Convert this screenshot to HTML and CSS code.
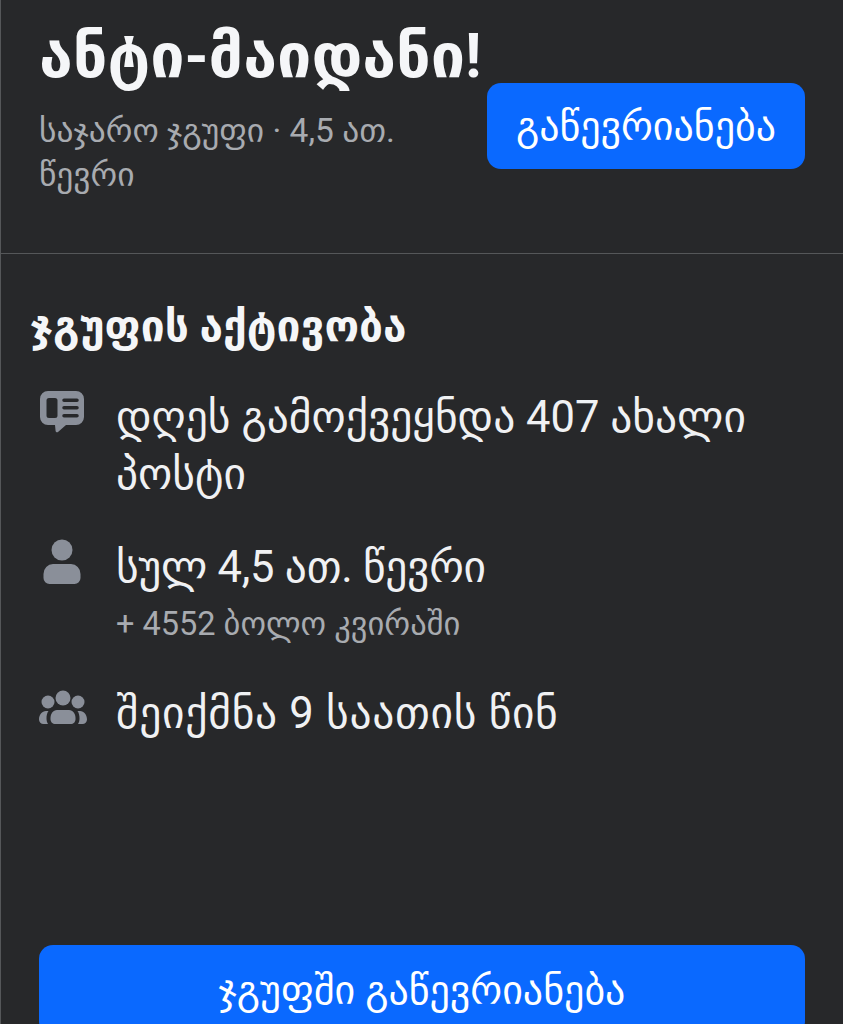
FILE: index.html
```html
<!DOCTYPE html>
<html lang="ka">
<head>
    <meta charset="UTF-8">
    <meta name="viewport" content="width=device-width, initial-scale=1.0">
    <title>ანტი-მაიდანი!</title>
    <link rel="stylesheet" href="styles.css">
</head>
<body>
    <div class="page">
        <header class="group-header">
            <div class="group-info">
                <h1>ანტი-მაიდანი!</h1>
                <p class="group-meta">საჯარო ჯგუფი · 4,5 ათ. წევრი</p>
            </div>
            <button class="btn btn-small">გაწევრიანება</button>
        </header>

        <section class="activity">
            <h2>ჯგუფის აქტივობა</h2>

            <div class="activity-row row-posts">
                <span class="icon-box">
                    <svg width="46" height="44" viewBox="0 0 46 44">
                        <path fill="#8a8f99" fill-rule="evenodd" d="M9 1h28a8 8 0 0 1 8 8v18a8 8 0 0 1-8 8H27l-8 7a1.500 1.500 0 0 1-2.400-1l-.6-6H9a8 8 0 0 1-8-8V9a8 8 0 0 1 8-8zM10 8a2.500 2.500 0 0 0-2.500 2.500v15A2.500 2.500 0 0 0 10 28h6a2.500 2.500 0 0 0 2.500-2.500v-15A2.500 2.500 0 0 0 16 8zM25 8.500a1.750 1.750 0 0 0 0 3.500h13a1.750 1.750 0 0 0 0-3.500zM25 16a1.750 1.750 0 0 0 0 3.500h13a1.750 1.750 0 0 0 0-3.500zM25 24a1.750 1.750 0 0 0 0 3.500h13a1.750 1.750 0 0 0 0-3.500z"/>
                    </svg>
                </span>
                <div class="activity-text">
                    <p>დღეს გამოქვეყნდა 407 ახალი პოსტი</p>
                </div>
            </div>

            <div class="activity-row row-members">
                <span class="icon-box">
                    <svg width="46" height="46" viewBox="0 0 46 46">
                        <circle cx="23" cy="11" r="10.500" fill="#8a8f99"/>
                        <path fill="#8a8f99" d="M14 25h18a10 10 0 0 1 9.500 10v4a6 6 0 0 1-6 6h-25a6 6 0 0 1-6-6v-4A10 10 0 0 1 14 25z"/>
                    </svg>
                </span>
                <div class="activity-text">
                    <p>სულ 4,5 ათ. წევრი</p>
                    <p class="sub">+ 4552 ბოლო კვირაში</p>
                </div>
            </div>

            <div class="activity-row row-created">
                <span class="icon-box">
                    <svg width="48" height="36" viewBox="0 0 48 36">
                        <circle cx="24" cy="8" r="7.500" fill="#8a8f99"/>
                        <circle cx="9" cy="12" r="6.500" fill="#8a8f99"/>
                        <circle cx="39" cy="12" r="6.500" fill="#8a8f99"/>
                        <path fill="#8a8f99" d="M18 20h12c4 0 6.500 4 6.500 8v1c0 3-2 5-5 5h-15c-3 0-5-2-5-5v-1c0-4 2.500-8 6.500-8z"/>
                        <path fill="#8a8f99" d="M7 21h2.500c-1.500 2-2 4.500-2 7.500 0 2 .5 4 1.500 5.500H4.500C2 34 0 32 0 29.500 0 25 3 21 7 21z"/>
                        <path fill="#8a8f99" d="M41 21h-2.500c1.500 2 2 4.500 2 7.500 0 2-.5 4-1.500 5.500h4.500c2.500 0 4.500-2 4.500-4.500C48 25 45 21 41 21z"/>
                    </svg>
                </span>
                <div class="activity-text">
                    <p>შეიქმნა 9 საათის წინ</p>
                </div>
            </div>
        </section>

        <div class="join-bar">
            <button class="btn btn-wide">ჯგუფში გაწევრიანება</button>
        </div>
    </div>
</body>
</html>
```

FILE: styles.css
```css
html, body {
    margin: 0;
    height: 100%;
}

body {
    background: #27282a;
    color: #e4e6eb;
    font-family: Roboto, "DejaVu Sans", sans-serif;
    overflow: hidden;
}

.page {
    height: 1024px;
    border-left: 1px solid #555759;
    position: relative;
    overflow: hidden;
}

.group-header {
    height: 254px;
    box-sizing: border-box;
    border-bottom: 1px solid #555759;
    padding: 22px 38px 0 38px;
    display: flex;
    align-items: flex-start;
    gap: 6px;
}

.group-info {
    flex: 1;
    min-width: 0;
}

h1 {
    margin: 0;
    font-size: 61px;
    line-height: 68px;
    font-weight: bold;
    color: #f5f6f8;
    white-space: nowrap;
}

.group-meta {
    margin: 19px 0 0;
    max-width: 420px;
    font-size: 33.5px;
    line-height: 44px;
    color: #a8abb0;
}

.btn {
    background: #0a69ff;
    color: #fff;
    border: none;
    border-radius: 14px;
    font-family: inherit;
    font-size: 40px;
}

.btn-small {
    flex: none;
    width: 318px;
    height: 86px;
    margin-top: 61px;
}

.activity {
    padding: 45px 38px 0 29px;
}

h2 {
    margin: 0 0 34px;
    font-size: 42.500px;
    line-height: 56px;
    font-weight: bold;
    color: #f5f6f8;
}

.activity-row {
    display: flex;
    align-items: flex-start;
    margin-left: 9px;
}

.row-members,
.row-created {
    margin-top: 34px;
}

.icon-box {
    flex: none;
    width: 77px;
    display: flex;
    justify-content: flex-start;
}

.row-posts .icon-box {
    padding-top: 1px;
}

.row-created .icon-box {
    padding-top: 5px;
}

.activity-text p {
    margin: 0;
    font-size: 43.500px;
    line-height: 57px;
    color: #f0f1f3;
}

.row-members .activity-text p:first-child {
    letter-spacing: -0.25px;
    line-height: 58px;
}

.row-created .activity-text p {
    letter-spacing: 0.7px;
    line-height: 58px;
}

.row-members {
    padding-top: 2px;
}

.activity-text .sub {
    font-size: 32.500px;
    line-height: 54px;
    color: #a8abb0;
}

.join-bar {
    position: absolute;
    left: 38px;
    right: 38px;
    top: 945px;
}

.btn-wide {
    width: 100%;
    height: 90px;
}
```
